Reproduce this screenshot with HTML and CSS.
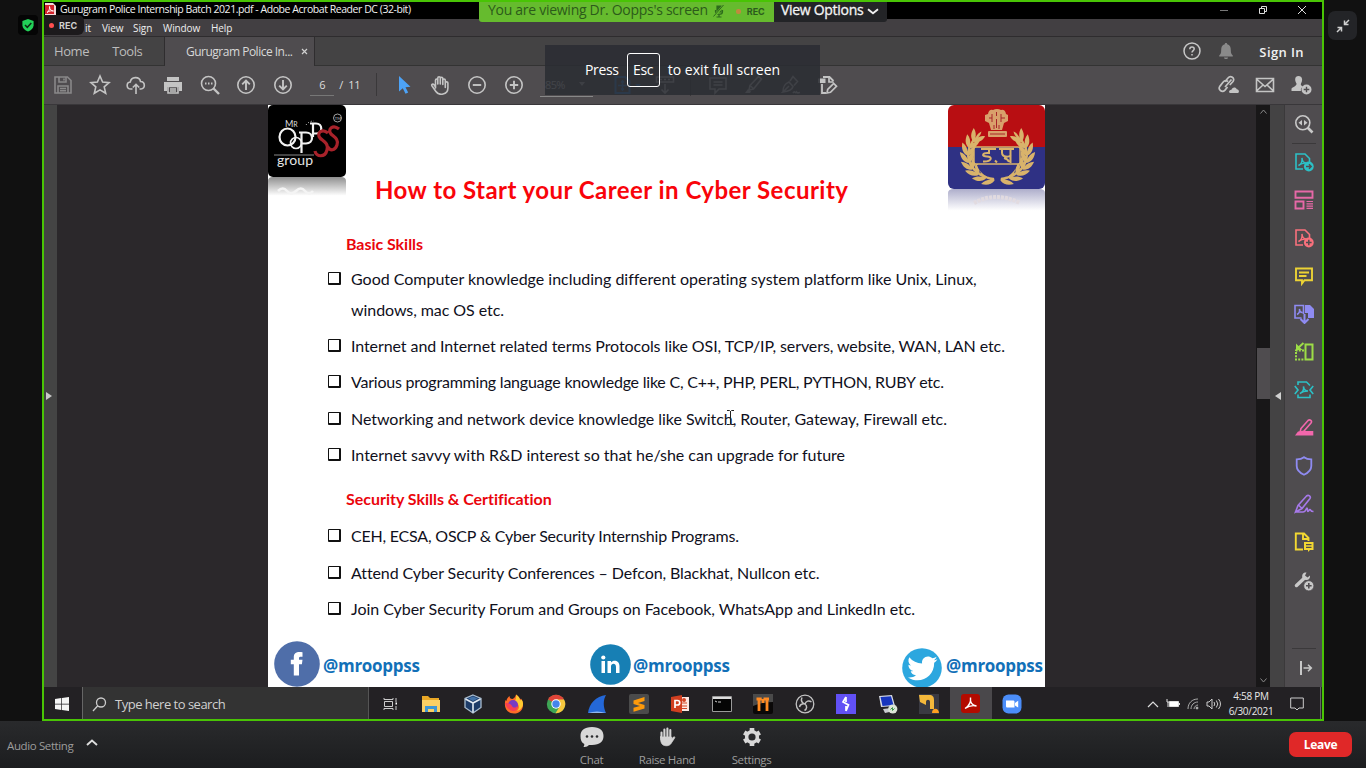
FILE: index.html
```
<!DOCTYPE html>
<html lang="en">
<head>
<meta charset="utf-8">
<title>Screen share</title>
<link rel="stylesheet" href="styles.css">
</head>
<body>
<div class="meeting">
  <aside class="side left">
    <div class="shield"><svg width="20" height="20" viewBox="0 0 20 20"><path d="M10 4l5.600 2v4.200c0 3-2.400 4.900-5.600 6.300-3.200-1.400-5.600-3.300-5.600-6.300V6z" fill="#22d058"/><path d="M7 10l2.300 2.300 4-4.300" fill="none" stroke="#0c2a14" stroke-width="1.500"/></svg></div>
  </aside>

  <main class="share">
    <div class="titlebar">
      <svg class="pdf" width="11" height="13" viewBox="0 0 11 13"><path d="M0 0h8l3 3v10H0z" fill="#f3d9da"/><rect y="2" width="9" height="9" fill="#d4232c"/><path d="M2 9.500c2-1 3-4 2.500-6 0 3 2 4.500 4 4.500-2-.5-5 0-6.500 1.500z" fill="none" stroke="#fff" stroke-width=".9"/></svg>
      <span class="window-name">Gurugram Police Internship Batch 2021.pdf - Adobe Acrobat Reader DC (32-bit)</span>
      <div class="winbtns">
        <svg width="12" height="12" viewBox="0 0 12 12"><path d="M2 6.500h8" stroke="#777"/></svg>
        <svg width="12" height="12" viewBox="0 0 12 12" fill="none" stroke="#ddd"><path d="M2.500 4.500h5v5h-5zM4.500 4V2.500h5v5H8"/></svg>
        <svg width="12" height="12" viewBox="0 0 12 12" fill="none" stroke="#ddd"><path d="M2 2l8 8M10 2l-8 8"/></svg>
      </div>
    </div>
    <nav class="menubar"><span class="m-edit">it</span><span class="m-view">View</span><span class="m-sign">Sign</span><span class="m-win">Window</span><span>Help</span></nav>
    <div class="tabs">
      <div class="tab-fixed"><span>Home</span><span>Tools</span></div>
      <div class="tab-active"><span>Gurugram Police In...</span><svg width="7" height="7" viewBox="0 0 7 7"><path d="M1 1l5 5M6 1L1 6" stroke="#d0d0d0" stroke-width="1.200"/></svg></div>
      <div class="tabs-right">
        <svg width="18" height="18" viewBox="0 0 18 18" fill="none" stroke="#c8c8c8"><circle cx="9" cy="9" r="8" stroke-width="1.500"/><path d="M6.800 7.200c0-3 4.400-2.800 4.400-.2 0 1.600-2.200 1.600-2.200 3.500M9 12v1.500" stroke-width="1.500"/></svg>
        <svg width="16" height="18" viewBox="0 0 16 18" fill="#8a8a8a"><path d="M8 1c.8 0 1.200.5 1.200 1.200C12 3 12.800 5 12.800 8c0 3 .6 4.300 2 5.500v1H1.200v-1c1.400-1.200 2-2.500 2-5.500 0-3 .8-5 3.600-5.800C6.800 1.500 7.200 1 8 1zM6 15.500h4c0 2-4 2-4 0z"/></svg>
        <span>Sign In</span>
      </div>
    </div>

    <div class="toolbar">
      <div class="tool dim"><svg width="20" height="20" viewBox="0 0 20 20"><path d="M2 2h12.500L18 5.500V18H2zM6 2v5h7V2M5 18v-7h10v7M7 13.500h6M7 15.800h6M11 3.500v2"/></svg></div>
      <div class="tool"><svg width="22" height="22" viewBox="0 0 22 22"><path d="M11 2l2.600 6 6.500.6-4.900 4.300 1.500 6.400L11 15.900l-5.700 3.400 1.500-6.400-4.900-4.300 6.500-.6z"/></svg></div>
      <div class="tool"><svg width="20" height="20" viewBox="0 0 20 20"><path d="M6.500 14H5c-5 0-5-6.500-.7-7C5 1.500 13.500 1 14.500 6.500c5 0 5 7.500.5 7.500h-1.500M10 19V9.500M6.800 12.500L10 9.300l3.200 3.200"/></svg></div>
      <div class="tool"><svg width="20" height="20" viewBox="0 0 20 20"><path d="M4 2h12v4H4z" fill="#c4c4c4" stroke="none"/><path d="M1 7h18v9h-3v-4H4v4H1z" fill="#c4c4c4" stroke="none"/><path d="M5 11.500h10V18H5zM7 14h6M7 16h6"/></svg></div>
      <div class="tool"><svg width="20" height="20" viewBox="0 0 20 20"><circle cx="8.500" cy="8.500" r="7"/><path d="M13.500 13.500l5.500 5.500" stroke-width="2.400"/><path d="M5 8.500h1.500M8 8.500h1.500M11 8.500h1.500" stroke-width="1.800"/></svg></div>
      <div class="tool"><svg width="20" height="20" viewBox="0 0 20 20"><circle cx="10" cy="10" r="8.200"/><path d="M10 15V5.500M6.200 9.300L10 5.500l3.800 3.800" stroke-width="1.900"/></svg></div>
      <div class="tool"><svg width="20" height="20" viewBox="0 0 20 20"><circle cx="10" cy="10" r="8.200"/><path d="M10 5v9.500M6.200 10.700L10 14.500l3.800-3.800" stroke-width="1.900"/></svg></div>
      <div class="pager"><span class="page-now">6</span><span class="page-of">/&nbsp; 11</span></div>
      <div class="tool"><svg width="20" height="20" viewBox="0 0 20 20"><path d="M5 1v15.500l3.800-3.300 2.700 5.600 2.700-1.300-2.700-5.300 5-.5z" fill="#4da3f7" stroke="none"/></svg></div>
      <div class="tool"><svg width="20" height="20" viewBox="0 0 20 20" stroke-linecap="round" stroke-linejoin="round"><path d="M5.500 13V5.200c0-1.700 2.300-1.700 2.300 0V9M7.800 9V3c0-1.700 2.500-1.700 2.500 0v6M10.300 9V3.500c0-1.700 2.500-1.700 2.500 0V9.500M12.800 9.500V5.200c0-1.600 2.500-1.600 2.500 0V12.500M15.300 9.500V8c0-1.600 2.600-1.500 2.600 0v5c0 7-9 8-12 3.500l-4-5.800c-.8-1.400 1-2.200 2.200-.9L5.500 12"/></svg></div>
      <div class="tool"><svg width="20" height="20" viewBox="0 0 20 20"><circle cx="10" cy="10" r="8.200"/><path d="M5.800 10h8.400" stroke-width="1.900"/></svg></div>
      <div class="tool"><svg width="20" height="20" viewBox="0 0 20 20"><circle cx="10" cy="10" r="8.200"/><path d="M5.800 10h8.400M10 5.800v8.400" stroke-width="1.900"/></svg></div>
      <div class="zoom"><span>85%</span><svg width="6" height="4" viewBox="0 0 6 4"><path d="M0 0h6L3 4z" fill="#bbb" stroke="none"/></svg></div>
      <div class="tool fit"><svg width="30" height="20" viewBox="0 0 30 20" stroke="#2f8fe8"><path d="M4.500 2H14l4.500 4v12h-14z" stroke-width="2"/><path d="M11.500 6v9M7 10.500h9M10 7.500L11.500 6 13 7.500M10 13.500l1.500 1.500 1.500-1.500"/><path d="M24 9h6l-3 3.500z" fill="#2f8fe8" stroke="none"/></svg></div>
      <div class="tool scroll"><svg width="20" height="20" viewBox="0 0 20 20"><path d="M1.500 2h17v5h-17zM5 4.500h2M9 4.500h2M13 4.500h2M10 9v9M6.500 14.500L10 18l3.500-3.500"/></svg></div>
      <div class="tool comment"><svg width="20" height="20" viewBox="0 0 20 20"><path d="M2 3h16v11h-7l-4 4v-4H2zM5.500 7h9M5.500 10h9"/></svg></div>
      <div class="tool"><svg width="20" height="20" viewBox="0 0 20 20"><path d="M14.500 1.500l3 2.500-8 10-4.500 1 1-4.500zM6.500 11l3 2.500"/><path d="M1 18l3-4 3 2.500-1 1.500z" fill="#c4c4c4" stroke="none"/></svg></div>
      <div class="tool"><svg width="20" height="20" viewBox="0 0 20 20"><path d="M2 17c0-5 1-8 6-10l4 4.500c-1 4-5 5-10 5.500l6-6M9 6l3-4.500 4.500 5-3.500 4M12 18c2-3 2 1 3.500-1 1 1.500 2 1 3.500.5"/></svg></div>
      <div class="tool"><svg width="20" height="20" viewBox="0 0 20 20"><path d="M5 2h6.500l4 4M4 9v9h4" stroke-width="1.800"/><path d="M0 3.500h7.500v4.500H0z" fill="#c4c4c4" stroke="none"/><path d="M11 3v4h4.500M9 18l.7-3.500 6-6 2.800 2.800-6 6z" stroke-width="1.700"/></svg></div>
      <div class="tools-right">
        <svg width="22" height="20" viewBox="0 0 22 20"><path d="M8 12l6.500-7.500M7.800 6.800L11 3c2.500-3 7.500 0 5 3.500L12.800 10M11 6.500c-2-1.500-4-.5-5 .8l-3 3.800c-2.500 3.400 2 7 5 4L10.500 12" stroke-width="1.700"/><path d="M12 18h8.500c2 0 2-3.500-.7-3.700-1-3-5-2.200-5.300.5-2.500-.2-3.500 3-1 3.200z" fill="#c4c4c4" stroke="none"/></svg>
        <svg width="20" height="20" viewBox="0 0 20 20"><path d="M1.500 3.500h17v13h-17zM1.500 4l8.500 7.500L18.500 4M1.500 16L8 10M18.500 16L12 10"/></svg>
        <svg width="21" height="20" viewBox="0 0 21 20" stroke="none" fill="#c4c4c4"><path d="M7.500 1c4 0 4.500 4.500 2.500 7.500-.5 1.500 0 2 2 3-2 1.500-2.500 3-2 4.500H.5v-2c0-2 5.500-2.500 5-5.500C3.500 5.500 3.500 1 7.500 1z"/><circle cx="15.500" cy="14.500" r="5"/><path d="M12.700 14.500h5.600M15.500 11.700v5.600" stroke="#4f4c4f" stroke-width="1.400"/></svg>
      </div>
    </div>

    <div class="workspace">
      <div class="nav-strip"><svg width="6" height="8" viewBox="0 0 6 8"><path d="M0 0l6 4-6 4z" fill="#c8c8c8"/></svg></div>
      <div class="canvas">
        <article class="page">
          <header class="page-head">
            <div class="logo">
              <svg width="78" height="94" viewBox="0 0 78 94">
                <defs><linearGradient id="fadeL" x1="0" y1="0" x2="0" y2="1"><stop offset="0" stop-color="#8f8f8f"/><stop offset=".85" stop-color="#fff"/></linearGradient></defs>
                <path d="M0 94V76q0-4 5-4h68q5 0 5 4v18z" fill="url(#fadeL)"/>
                <path d="M10 86q5-5 9 0t9 0 9 0 8 0" stroke="#f4f4f4" stroke-width="2.500" fill="none"/>
                <rect y="0" width="78" height="72" rx="5" fill="#000"/>
                <text x="17" y="22" font-family="Lato, sans-serif" font-size="9" fill="#ddd">M<tspan font-size="7">R</tspan></text>
                <g fill="none" stroke="#f2f2f2" stroke-width="2.200">
                  <ellipse cx="19.500" cy="32" rx="8" ry="8.500"/><circle cx="28" cy="38" r="5.500" stroke-width="1.600"/>
                  <path d="M33.500 48V27M31 27.500h7c8 0 8 11 0 11h-4M45 32V18M42 18.500h6c7 0 7 10 0 10h-3"/>
                  <path d="M38 20q3-4 8-4" stroke-dasharray="1 2" stroke-width="1"/>
                </g>
                <path d="M60 28c-6-5-12 0-8 5 3 3 9 5 7 12-2 8-11 7-12 1M71 24c-6-5-12 0-8 5 3 3 8 5 6 11-2 6-7 6-9 2" fill="none" stroke="#a8222a" stroke-width="3.200"/>
                <path d="M6 50h40" stroke="#aaa" stroke-width=".8"/>
                <text x="9" y="60" font-family="Lato, sans-serif" font-size="14" fill="#e5e5e5" textLength="36">group</text>
                <circle cx="69.500" cy="13" r="4" fill="none" stroke="#ccc" stroke-width=".8"/><text x="66.800" y="14.800" font-family="Lato, sans-serif" font-size="4" fill="#ccc">TM</text>
              </svg>
            </div>
            <h1>How to Start your Career in Cyber Security</h1>
            <div class="crest">
              <svg width="97" height="108" viewBox="0 0 97 108">
                <defs><linearGradient id="fadeR" x1="0" y1="0" x2="0" y2="1"><stop offset="0" stop-color="#aeaecb"/><stop offset=".9" stop-color="#fff"/></linearGradient>
                <clipPath id="crestClip"><rect y="0" width="97" height="84" rx="6"/></clipPath>
                <path id="leaf" d="M0 5C-5 3-7-1-7-7-3-5-1-2-.3 1-.8-3 0-6 1.500-8 3-4 2-1 .8 1 2-3 4-5 7-6 7 0 5 3 0 5z"/>
                <g id="branch"><use href="#leaf" transform="translate(41.700 74.100) rotate(-75)"/><use href="#leaf" transform="translate(33.600 71.200) rotate(-58)"/><use href="#leaf" transform="translate(26.900 66.400) rotate(-41)"/><use href="#leaf" transform="translate(22.100 60.200) rotate(-24)"/><use href="#leaf" transform="translate(19.700 53) rotate(-7)"/><use href="#leaf" transform="translate(20 45.700) rotate(10)"/><use href="#leaf" transform="translate(22.800 38.600) rotate(24)"/><use href="#leaf" transform="translate(28 32.600) rotate(32)"/></g></defs>
                <path d="M0 108V88q0-4 6-4h85q6 0 6 4v20z" fill="url(#fadeR)"/>
                <path d="M26 98q22-12 46 0" stroke="#e2dbe0" stroke-width="4" stroke-dasharray="3 1" fill="none"/>
                <g clip-path="url(#crestClip)"><path d="M0-2h97v45H0z" fill="#b80e12"/><path d="M0 42h97v43H0z" fill="#2f3184"/></g>
                <g fill="#d9b36b"><use href="#branch"/><use href="#branch" transform="translate(99 0) scale(-1 1)"/></g>
                <path d="M29 60h40c-3 9-10 13-20 13s-17-4-20-13z" fill="#2f3184"/>
                <rect x="26" y="42" width="46" height="17" rx="2" fill="#2f3184" stroke="#d9b36b" stroke-width="1.500"/>
                <path d="M33 44h15M41 44v4c-7-.5-8 3.500-2 3.500 6 0 5 5.500-4 5M47 55.500l2 2M51 44h15M54 44v3.500c0 5 7 5 9 2.500M62.500 44v14M56 53q4 1 5 4" fill="none" stroke="#d9b36b" stroke-width="2"/>
                <path d="M40 9q1-5 5-4 4-2 8 0 4-1 5 4l2 1v6l-4 2-2 7H43l-2-7-4-2v-6z" fill="#d9a06b"/><rect x="40" y="26" width="19" height="6" rx="1" fill="#d9a06b"/>
                <path d="M44 9v8M48.500 7v4M53 9v8M46 20v4M48.500 14v9M51 20v4M41 13h3M53 13h4M42 29h15" stroke="#a8242a" fill="none"/>
              </svg>
            </div>
          </header>
          <h2 class="h-basic">Basic Skills</h2>
          <ul class="list">
            <li class="two"><i class="box"></i><p>Good Computer knowledge including different operating system platform like Unix, Linux,<br><span class="l-win">windows, mac OS etc.</span></p></li>
            <li><i class="box"></i><p class="l-net">Internet and Internet related terms Protocols like OSI, TCP/IP, servers, website, WAN, LAN etc.</p></li>
            <li><i class="box"></i><p class="l-prog">Various programming language knowledge like C, C++, PHP, PERL, PYTHON, RUBY etc.</p></li>
            <li class="has-cursor"><i class="box"></i><p class="l-dev">Networking and network device knowledge like Switch, Router, Gateway, Firewall etc.</p>
              <svg class="ibeam" width="7" height="15" viewBox="0 0 7 15" fill="none" stroke="#222"><path d="M0 .5h2.500l1 1 1-1H7M3.500 1v13M0 14.500h2.500l1-1 1 1H7"/></svg></li>
            <li><i class="box"></i><p class="l-rnd">Internet savvy with R&amp;D interest so that he/she can upgrade for future</p></li>
          </ul>
          <h2 class="h-cert">Security Skills &amp; Certification</h2>
          <ul class="list">
            <li><i class="box"></i><p class="l-ceh">CEH, ECSA, OSCP &amp; Cyber Security Internship Programs.</p></li>
            <li><i class="box"></i><p class="l-conf">Attend Cyber Security Conferences – Defcon, Blackhat, Nullcon etc.</p></li>
            <li><i class="box"></i><p class="l-dev">Join Cyber Security Forum and Groups on Facebook, WhatsApp and LinkedIn etc.</p></li>
          </ul>
          <footer class="social">
            <div class="fb"><svg width="46" height="46" viewBox="0 0 46 46"><circle cx="23" cy="23" r="22.800" fill="#4f6ea9"/><path d="M19.800 34.500V23.300h-3v-4.500h3v-2.500c0-4.600 3-5.800 8.700-5v4.400c-2.500-.2-3.500 0-3.500 1.500v1.600h3.500l-.6 4.500H25v11.200z" fill="#fff"/></svg><span>@mrooppss</span></div>
            <div class="li"><svg width="41" height="41" viewBox="0 0 41 41"><circle cx="20.500" cy="20.500" r="20.300" fill="#177fb4"/><path d="M11.500 17H15v12h-3.500zM17.500 17H21v1.500c2-3 8.500-2.500 8.500 3.500v7H26v-6c0-4.500-5-4-5-.5V29h-3.500z" fill="#fff"/><circle cx="13.300" cy="13.500" r="2.100" fill="#fff"/></svg><span>@mrooppss</span></div>
            <div class="tw"><svg width="40" height="40" viewBox="0 0 40 40"><circle cx="20" cy="20" r="19.800" fill="#2ca7df"/><path d="M6 29.500c3.500.3 6-.6 8-2.200-3-.3-4.600-1.800-5.300-4 1 .1 1.600.1 2.500-.2-3-1-4.800-3.300-4.800-6.400.8.500 1.600.7 2.500.8-2.600-2-3.200-5.300-1.600-8.300 3.400 4 7.500 6 12.800 6.300-1-6 5.800-9.500 10.300-5.200 1.500-.3 2.800-.8 4.200-1.600-.5 1.600-1.300 2.600-2.700 3.600 1.300-.1 2.300-.4 3.500-1-.8 1.500-1.800 2.500-3.200 3.500C32.300 29 18 37 6 29.500z" fill="#fff"/></svg><span>@mrooppss</span></div>
          </footer>
        </article>
      </div>
      <div class="scrollbar">
        <svg width="7" height="5" viewBox="0 0 7 5"><path d="M.5 4.500l3-3.500 3 3.500" fill="none" stroke="#888"/></svg>
        <div class="thumb"></div>
        <svg class="down" width="7" height="5" viewBox="0 0 7 5"><path d="M.5.500l3 3.500 3-3.500" fill="none" stroke="#888"/></svg>
      </div>
      <div class="pane-strip"><svg width="6" height="8" viewBox="0 0 6 8"><path d="M6 0L0 4l6 4z" fill="#d0d0d0"/></svg></div>
      <div class="panel">
        <div class="p-icon"><svg width="20" height="20" viewBox="0 0 20 20" stroke="#c8c8c8"><circle cx="8.800" cy="8.800" r="7"/><path d="M13.500 13.500l5 5" stroke-width="2.600"/><path d="M8 6v5.600L4.500 8.800zM10 6v5.600l3.500-2.800z" fill="#c8c8c8" stroke="none"/></svg></div>
        <div class="p-icon line"><svg width="20" height="20" viewBox="0 0 20 20" stroke="#2cc0c6"><path d="M9 17H2V2h9l4.500 4.500V10M4.500 13.500c3-1.500 4-5 3.500-7.500 0 3 2 5 4.500 5-3-.3-5.500.5-8 2.500z"/><circle cx="14.800" cy="14.500" r="4.900" fill="#2cc0c6" stroke="none"/><path d="M12 14.500h5M15 12.300l2.200 2.200-2.200 2.200" stroke="#4f4c4f" stroke-width="1.400"/></svg></div>
        <div class="p-icon"><svg width="20" height="20" viewBox="0 0 20 20" stroke="#e668a7"><path d="M1.500 1.500h17v6.300h-17zM1.500 11.500h8v7h-8z" stroke-width="1.900"/><path d="M12.500 11.500h6.500M12.500 13.800h6.500M12.500 16.100h6.500M12.500 18.400h6.500" stroke-width="1.200"/></svg></div>
        <div class="p-icon"><svg width="20" height="20" viewBox="0 0 20 20" stroke="#f9707c"><path d="M9 17H2V2h9l4.500 4.500V10M4.500 13.500c3-1.500 4-5 3.500-7.500 0 3 2 5 4.500 5-3-.3-5.500.5-8 2.500z"/><circle cx="14.800" cy="14.500" r="4.900" fill="#f9707c" stroke="none"/><path d="M12 14.500h5.600M14.800 11.700v5.600" stroke="#4f4c4f" stroke-width="1.500"/></svg></div>
        <div class="p-icon"><svg width="20" height="20" viewBox="0 0 20 20" stroke="#ecd235"><path d="M2 2.500h16v11.700h-7.500L8 17.500v-3.300H2zM5 6.500h10M5 10h7.500" stroke-width="1.900"/></svg></div>
        <div class="p-icon"><svg width="20" height="20" viewBox="0 0 20 20" stroke="#8f8bf2"><path d="M7.500 14H1V1.500h8.500V10M3 10.500c2-1 3-3 2.500-5.500 0 2 1 3.500 3 3.500"/><path d="M11 1h5l4 4v9h-6V9h-3z" fill="#8f8bf2" stroke="none"/><path d="M10.500 10v8M6.500 15l4 4 4-4" stroke-width="2"/></svg></div>
        <div class="p-icon"><svg width="20" height="20" viewBox="0 0 20 20" stroke="#9ddd47"><path d="M11.500 2.500h7v15h-7z" stroke-width="2"/><path d="M10 8.500H2v9h8" stroke-dasharray="2 1.200" stroke-width="2"/><path d="M9.500 1L4 6" stroke-width="2"/><path d="M2 1.500V8h6.500z" fill="#9ddd47" stroke="none"/></svg></div>
        <div class="p-icon"><svg width="20" height="20" viewBox="0 0 20 20" stroke="#2cc0c6"><path d="M4 5V2h8.500L16 5.500M4 14.500v3h12v-3M.8 6L4 10 .8 14M19.200 6L16 10l3.200 4M6 13.500c3-1.500 4-4.500 3.500-7 .3 3 2 4.500 4.500 4.500-3 0-5.500.5-8 2.500z"/></svg></div>
        <div class="p-icon"><svg width="20" height="20" viewBox="0 0 20 20" stroke="#f267ac"><path d="M7 10.500L14 2.500c2-1.500 4.500.5 3 2.500l-7 8-4 1.500z"/><path d="M5.500 11l4 4M8.500 13h10.800v4.500H1l3-4z" fill="#f267ac" stroke="none"/></svg></div>
        <div class="p-icon"><svg width="20" height="20" viewBox="0 0 20 20" stroke="#8f8bf2"><path d="M10 1.200c2 1.600 4.500 2.200 7.300 2.200V10c0 4-3.300 7-7.300 8.800C6 17 2.700 14 2.700 10V3.400c2.800 0 5.300-.6 7.300-2.200z" stroke-width="1.800"/></svg></div>
        <div class="p-icon"><svg width="20" height="20" viewBox="0 0 20 20" stroke="#a679e8"><path d="M1.500 18L4 11.500 12.500 2c2-1.500 5 .5 3.300 2.800L8 14.500zM8 14.500l-3-3M1.500 18H9c3 0 3-4 4-4s0 3.500 1 3.500 1-2 2-2 0 2 3.500 2"/></svg></div>
        <div class="p-icon"><svg width="20" height="20" viewBox="0 0 20 20" stroke="#f3d832"><path d="M9 17.500H1.800v-16H10l4.500 4.500V9M9 1.500V7h5.500" stroke-width="1.900"/><path d="M10 10h9.500v8H16l-2 2v-2h-4z" fill="#f3d832" stroke="none"/><path d="M12 12.700h5.500M12 15.300h5.500" stroke="#4f4c4f" stroke-width="1.200"/></svg></div>
        <div class="p-icon"><svg width="20" height="20" viewBox="0 0 20 20" stroke="#c8c8c8"><path d="M2.500 14.500L10 7.500" stroke-width="3.500" stroke-linecap="round"/><path d="M12.500 1.500C9 1 7.500 4 8.500 7l3 2c3 .5 5-1.500 4.500-4.500l-2.500 2-2.500-2z" fill="#c8c8c8" stroke="none"/><circle cx="14.800" cy="14.800" r="5.100" fill="#c8c8c8" stroke="#4f4c4f" stroke-width=".8"/><path d="M12 14.800h5.600M14.800 12v5.600" stroke="#4f4c4f"/></svg></div>
        <div class="p-icon last"><svg width="14" height="14" viewBox="0 0 14 14" stroke="#c8c8c8"><path d="M2 0v14" stroke-width="2"/><path d="M4.500 7H12M9 3.800L12.300 7 9 10.200"/></svg></div>
      </div>
    </div>

    <div class="taskbar">
      <div class="start"><svg width="14" height="14" viewBox="0 0 14 14" fill="#f5f5f5"><path d="M0 2l6.300-.9v5.600H0zM7 1l7-1v6.700H7zM0 7.400h6.300V13L0 12zM7 7.400h7V14l-7-1z"/></svg></div>
      <div class="search"><svg width="15" height="15" viewBox="0 0 15 15" fill="none" stroke="#ccc" stroke-width="1.300"><circle cx="9" cy="5.500" r="4.500"/><path d="M5.800 8.800L1 14"/></svg><span>Type here to search</span></div>
      <div class="apps">
        <div><svg width="14" height="14" viewBox="0 0 14 14" fill="none" stroke="#ccc"><path d="M1.500 4.500h8v5h-8zM1 1v1.500h9V1M1 13v-1.500h9V13M13 1v4M13 9v4"/><path d="M12.500 5.500h1.500v2h-1.500z" fill="#fff" stroke="none"/></svg></div>
        <div><svg width="20" height="18" viewBox="0 0 20 18"><path d="M1 1h6l2 2h9v4H1z" fill="#e9a826"/><path d="M1 5h18v12H1z" fill="#fbd064"/><path d="M4 17v-6h12v6h-3v-3H7v3z" fill="#3f97d3"/></svg></div>
        <div><svg width="18" height="20" viewBox="0 0 18 20"><path d="M9 1l8 3.500v9L9 19l-8-5.500v-9z" fill="#1d3c68" stroke="#a9bdd0" stroke-width="1.300"/><path d="M1.500 5L9 9l7.500-4M9 9v9.500" stroke="#e3ebf3" stroke-width="1.600" fill="none"/><path d="M4 4.500l5-2 5 2-5 2.500z" fill="#4473a8"/></svg></div>
        <div><svg width="20" height="20" viewBox="0 0 20 20"><path d="M10 19.500C2 19.500-.5 12 1.500 6l1 1c0-2 1.500-4 3-5 0 2 1 3 3 3 2-1 3-2 3.500-4.500 3 2 3.500 3.500 4 5l1-1c5 8 0 15-7 15z" fill="#ff6b28"/><path d="M12 .5c3 2 4 4 4 6l1.500-1C21 10 18 16 13 17c4-4 1-8-2-10 1-2 1.500-4 1-6.500z" fill="#ffcb30"/><circle cx="9" cy="11" r="5" fill="#793bc2"/><path d="M1 9c3 0 6 1 7 3s4 2 5 0c2 4-3 6-6 4.500S2 13 1 9z" fill="#f83e54"/></svg></div>
        <div><svg width="20" height="20" viewBox="0 0 20 20"><circle cx="10" cy="10" r="9.200" fill="#3ea655"/><path d="M10 10L2 5.400A9.200 9.200 0 0118 5.400z" fill="#e04438"/><path d="M10 5.400h8a9.200 9.200 0 01-8.500 13.800L14 12z" fill="#f6c73e"/><circle cx="10" cy="10" r="4.700" fill="#fff"/><circle cx="10" cy="10" r="3.700" fill="#4485ec"/></svg></div>
        <div><svg width="20" height="20" viewBox="0 0 20 20"><path d="M1 19C2 10 9 2 19 1c-3 5-3 12 0 18z" fill="#2468d8"/><path d="M1 19q9-3 18 0z" fill="#8fb7ef"/></svg></div>
        <div><svg width="20" height="20" viewBox="0 0 20 20"><rect width="20" height="20" rx="2" fill="#4b4b4b"/><path d="M4.500 6.500l11-3.500v4L9 9l6.500 2v3.500l-11 3.300v-4L11 12l-6.500-2z" fill="#ff9a0a"/></svg></div>
        <div><svg width="20" height="20" viewBox="0 0 20 20"><path d="M10 3h9v14h-9z" fill="#fbe9e4"/><path d="M12 9h5M12 12h5M12 14.500h5" stroke="#d24625"/><circle cx="14" cy="6" r="2" fill="#d24625"/><path d="M1 3l11-2v18L1 17z" fill="#d03f20"/><path d="M5 14V6.500h2.500c3 0 3 4.500 0 4.500H5" fill="none" stroke="#fff" stroke-width="1.700"/></svg></div>
        <div><svg width="20" height="16" viewBox="0 0 20 16"><path d="M.5.500h19v15H.5z" fill="#050505" stroke="#9a9a9a"/><path d="M1 2h18" stroke="#ddd" stroke-width="2"/><path d="M3 5l2 1M6 6h3" stroke="#ccc"/></svg></div>
        <div><svg width="20" height="20" viewBox="0 0 20 20"><rect width="20" height="20" rx="2" fill="#0a0808"/><path d="M0 0h20v8Q10 8 0 12z" fill="#4a4a4a"/><path d="M6 17V5.500M3.500 5h5.200M14 17V5.500M10.500 5H16M10 5v4" fill="none" stroke="#ff8a22" stroke-width="2.800"/></svg></div>
        <div><svg width="20" height="20" viewBox="0 0 20 20" fill="none" stroke="#c2c2c2"><circle cx="10" cy="10" r="8.800" fill="#262428" stroke-width="1.300"/><path d="M7 3.500c-1.500 3 0 6 3 6.500M10 10c1-3 4-4 6.500-2M10 10c2.500 2 2 5-.5 6.500M10 10c-2.500-.8-5 .5-5.500 3" stroke-width="1.500"/></svg></div>
        <div><svg width="20" height="20" viewBox="0 0 20 20"><path d="M0 0h20v20H0z" fill="#6150f5"/><path d="M10 3L7 8l5.500 3L10 17M10 3v5M10 17v-5" stroke="#fff" stroke-width="1.700" fill="none"/></svg></div>
        <div><svg width="20" height="20" viewBox="0 0 20 20"><path d="M1 2l13-1 3 11-14 1z" fill="#d8dce5"/><path d="M2.500 3l10.500-.8L15.500 11 4.500 12z" fill="#1735bd"/><path d="M5 15l8-1 3 3-9 2z" fill="#c9cbd0"/><circle cx="14.800" cy="15" r="4.600" fill="#dce5d7"/><path d="M12.500 15.500l2-2v3l2-2" stroke="#3b9448" fill="none"/></svg></div>
        <div><svg width="20" height="20" viewBox="0 0 20 20"><path d="M0 0h20v20H0z" fill="#3a3a42"/><path d="M0 1h10c4 0 5 2 5 5v9h-4V8c0-3-4-3-4 0v3L1 8z" fill="#f4b83b"/><path d="M13 19c0-6 7-5 7 0z" fill="#ff9f20"/></svg></div>
        <div class="current"><svg width="19" height="19" viewBox="0 0 19 19"><rect width="19" height="19" rx="3" fill="#b30b00"/><path d="M4 14.500c4-2.500 6-7 5.500-11C9 8 11 11.500 15.500 12c-4-1-8 0-11.500 2.500z" stroke="#fff" stroke-width="1.400" fill="none"/></svg></div>
        <div><svg width="20" height="20" viewBox="0 0 20 20"><rect x=".5" y=".5" width="19" height="19" rx="6" fill="#4b8df8"/><path d="M4 6.500h7c1 0 1.500.5 1.500 1.500v5.500h-7C4.500 13.500 4 13 4 12zM13 9l3.200-2.300v6.800L13 11.500z" fill="#fff"/></svg></div>
      </div>
      <div class="tray">
        <svg width="12" height="8" viewBox="0 0 12 8"><path d="M1 7l5-5 5 5" fill="none" stroke="#ddd" stroke-width="1.200"/></svg>
        <svg width="14" height="10" viewBox="0 0 14 10"><path d="M3.500 2.500h9v5h-9z" fill="#fff" stroke="#ddd"/><path d="M1 0v3h2.500M2 3v5" stroke="#ddd" fill="none"/><path d="M13 4h1v2h-1z" fill="#ddd"/></svg>
        <svg width="12" height="12" viewBox="0 0 12 12" fill="none" stroke="#aaa"><path d="M1 11C1 5 5 1 11 1M4 11c0-4 3-7 7-7M7 11c0-2 2-4 4-4"/><circle cx="10" cy="10" r="1" fill="#ddd"/></svg>
        <svg width="15" height="12" viewBox="0 0 15 12" fill="none" stroke="#ccc"><path d="M1 4h2l3-3v10L3 8H1zM8 4q1.500 2 0 4M10.300 2.500q3 3.500 0 7M12.500 1q4 5 0 10"/></svg>
        <div class="clock"><span>4:58 PM</span><span>6/30/2021</span></div>
        <svg width="14" height="14" viewBox="0 0 14 14"><path d="M.7 1h12.600v10H9l-2 2-2-2H.7z" fill="none" stroke="#ccc"/></svg>
      </div>
    </div>

    <div class="rec"><i></i>REC</div>
    <div class="banner">
      <div class="viewing"><span>You are viewing Dr. Oopps's screen</span><svg width="12" height="14" viewBox="0 0 12 14"><path d="M4 2h4v6H4zM2.500 6v2c0 3 7 3 7 0V6M6 10.500V13M3.500 13h5" fill="none" stroke="#2d6a1c" stroke-width="1.200"/><path d="M4 2h4v6H4z" fill="#2d6a1c"/><path d="M1 12.500L11 1" stroke="#66bb2e" stroke-width="2.500"/><path d="M.5 12.500L10.500 1" stroke="#2d6a1c"/></svg><i></i><b>REC</b></div>
      <div class="options"><span>View Options</span><svg width="12" height="7" viewBox="0 0 12 7"><path d="M1 1.200l5 4 5-4" fill="none" stroke="#f0f0f0" stroke-width="1.900"/></svg></div>
    </div>
    <div class="toast"><span class="t-press">Press</span><kbd>Esc</kbd><span>to exit full screen</span></div>
  </main>

  <aside class="side right">
    <div class="shrink"><svg width="14" height="14" viewBox="0 0 14 14" stroke="#d0d0d0" stroke-width="1.500" fill="none"><path d="M13 1L9 5M8.500 1.500v4h4M1 13l4-4M1.500 8.500h4v4"/></svg></div>
  </aside>

  <div class="controls">
    <div class="audio"><span>Audio Setting</span><svg width="12" height="7" viewBox="0 0 12 7"><path d="M1 6l5-4.500L11 6" fill="none" stroke="#ddd" stroke-width="1.900"/></svg></div>
    <div class="buttons">
      <div class="b-chat"><svg width="24" height="22" viewBox="0 0 24 22"><path d="M12 1c8 0 11.500 3.500 11.500 9S20 19 12 19H9q-2 2.500-5.500 2 1-1.500.8-3C1.500 16.500.5 14 .5 10 .5 4.500 4 1 12 1z" fill="#d8d8d8"/><g fill="#2a2b2d"><circle cx="7" cy="10.500" r="1.300"/><circle cx="12" cy="10.500" r="1.300"/><circle cx="17" cy="10.500" r="1.300"/></g></svg><span>Chat</span></div>
      <div class="b-hand"><svg width="18" height="22" viewBox="0 0 18 22" fill="none" stroke="#d4d4d4" stroke-width="2.100" stroke-linecap="round"><path d="M3.500 13V6.500M6.400 11V3.500M9.400 11V2.500M12.300 11V4"/><path d="M2.500 11h11v2l2-2c1-.8 1.700.2 1 1.200l-3.800 5.800c-2 2.500-7.500 2.300-9-.5-1-2-1.200-4-1.200-6.500z" fill="#d4d4d4" stroke-width=".8"/></svg><span>Raise Hand</span></div>
      <div class="b-set"><svg width="20" height="22" viewBox="0 0 20 22"><g fill="none" stroke="#d8d8d8"><circle cx="10" cy="11" r="5.200" stroke-width="3.800"/><path d="M10 2v18M2.200 6.500l15.600 9M2.200 15.500l15.600-9" stroke-width="4.600"/></g><circle cx="10" cy="11" r="3.600" fill="#28292b"/></svg><span>Settings</span></div>
    </div>
    <div class="leave">Leave</div>
  </div>
</div>
</body>
</html>
```
FILE: styles.css
```
* { box-sizing: border-box; }
body { margin: 0; background: #111; font-family: "Open Sans", "Noto Sans", sans-serif; color: #e0e0e0; }
svg { display: block; flex: none; }
h1, h2, p, ul { margin: 0; padding: 0; font-weight: normal; }
span, p, h1, h2 { white-space: nowrap; }

.meeting { width: 1366px; height: 768px; overflow: hidden; display: grid; grid-template: 721px 47px / 42px 1282px 42px; background: #111; }
.side.left { padding: 15px 0 0 18px; }
.shield { width: 20px; height: 20px; border-radius: 4px; background: #050505; }
.side.right { padding: 11px 0 0 4px; }
.shrink { width: 29px; height: 29px; border-radius: 7px; background: #232427; display: flex; align-items: center; justify-content: center; }

.share { position: relative; border: 2px solid #49c405; display: flex; flex-direction: column; background: #4f4c4f; overflow: hidden; }

.titlebar { height: 17px; background: #000; display: flex; align-items: center; flex: none; padding-bottom: 2px; }
.pdf { margin-left: 1px; }
.window-name { margin-left: 4px; font-size: 10.5px; letter-spacing: -0.447px; color: #f0f0f0; line-height: 15px; }
.winbtns { margin-left: auto; display: flex; gap: 27px; padding-right: 14px; }

.menubar { height: 18px; background: #423f42; border-bottom: 1px solid #2e2c2e; display: flex; align-items: center; padding-left: 41px; font-size: 10px; color: #eee; flex: none; }
.menubar span { letter-spacing: -0.1px; line-height: 14px; }
.m-edit { width: 17px; }
.m-view { width: 31px; }
.m-sign { width: 30px; }
.m-win { width: 48px; }

.tabs { height: 29px; background: #444344; display: flex; flex: none; }
.tab-fixed { width: 121px; border-right: 1px solid #2f2d2f; border-bottom: 1px solid #333; display: flex; align-items: center; padding-left: 10px; gap: 23px; font-size: 13px; letter-spacing: -0.4px; color: #bcbcbc; }
.tab-active { width: 149px; background: #4f4c4f; display: flex; align-items: center; padding-left: 21px; gap: 9px; font-size: 12px; letter-spacing: -0.5px; color: #d8d8d8; }
.tabs-right { flex: 1; border-left: 1px solid #2f2d2f; border-bottom: 1px solid #333; display: flex; align-items: center; justify-content: flex-end; padding-right: 18px; font-size: 13px; letter-spacing: 0.4px; color: #f0f0f0; font-weight: 600; }
.tabs-right span { margin-left: 25px; line-height: 18px; padding-top: 1px; }
.tabs-right svg + svg { margin-left: 17px; }

.toolbar { height: 39px; border-bottom: 1px solid #39373a; display: flex; align-items: center; flex: none; fill: none; stroke: #c4c4c4; stroke-width: 1.6; padding: 0 0 1px .5px; }
.tool { width: 36.7px; flex: none; display: flex; justify-content: center; }
.dim { opacity: .5; }
.pager { width: 76px; height: 23px; flex: none; border-right: 1px solid #3a383a; display: flex; align-items: center; font-size: 11px; padding-left: 9px; margin-right: 8px; color: #ddd; }
.page-now { width: 24px; height: 23px; line-height: 23px; text-align: center; border-bottom: 1px solid #777; }
.page-of { margin-left: 5px; letter-spacing: -.3px; }
.zoom { width: 53px; height: 24px; margin-left: 8px; flex: none; border-bottom: 1px solid #888; display: flex; align-items: center; gap: 14px; padding-left: 5px; font-size: 11px; letter-spacing: -.7px; }
.fit { width: 38px; margin-left: 11px; padding-left: 5px; }
.scroll { width: 43px; height: 23px; align-items: center; padding-right: 8px; border-right: 1px solid #3a383a; margin-left: 6px; }
.comment { width: 36px; margin-left: 9px; }
.tools-right { margin-left: auto; display: flex; align-items: center; gap: 16px; padding-right: 10px; }

.workspace { flex: 1; min-height: 0; display: flex; }
.nav-strip { width: 13px; background: #444; display: flex; align-items: center; padding-left: 2px; }
.canvas { flex: 1; background: #2b282b; padding-left: 211px; }
.page { width: 777px; height: 583px; background: #fff; color: #10101c; font: 16px/31px Lato, Carlito, sans-serif; font-variant-ligatures: none; overflow: hidden; }
.page-head { height: 124px; display: flex; justify-content: space-between; align-items: flex-start; }
h1 { margin-top: 70px; font-size: 24px; line-height: 30px; font-weight: bold; letter-spacing: 0.46px; color: #f9040a; }
.logo { width: 78px; }
.page-head h1 { margin-left: 29px; margin-right: auto; }
h2 { padding-left: 78px; font-size: 16px; line-height: 30px; font-weight: bold; color: #ea050c; letter-spacing: -.04px; }
.h-basic { height: 34px; }
.h-cert { height: 44.5px; padding-top: 10.5px; letter-spacing: -.02px; }
.list { list-style: none; }
.list li { height: 36.5px; display: flex; padding-left: 60px; line-height: 31px; padding-top: 2.5px; }
.list li.two { height: 64px; padding-top: 0; }
.list p { letter-spacing: -.015px; }
.box { width: 13px; height: 13px; flex: none; margin: 9px 10px 0 0; border: 1px solid #111; border-right-width: 2px; border-bottom-width: 2px; border-radius: 1px; }
.list .l-win { letter-spacing: -.07px; }
.list .l-net { letter-spacing: -.087px; }
.list .l-prog { letter-spacing: -.221px; }
.list .l-dev { letter-spacing: -.047px; }
.list .l-rnd { letter-spacing: -.021px; }
.list .l-ceh { letter-spacing: -.208px; }
.list .l-conf { letter-spacing: -.097px; }
.has-cursor { position: relative; }
.ibeam { position: absolute; left: 459px; top: 10px; }
.social { height: 60px; display: flex; font: bold 17px/24px "Open Sans", sans-serif; letter-spacing: -.268px; color: #1270b8; }
.social div { display: flex; align-items: flex-start; }
.social span { margin-top: 27px; }
.fb { width: 322px; padding-left: 6px; gap: 3px; }
.fb svg { margin-top: 14px; }
.li { width: 312px; gap: 2px; }
.li svg { margin-top: 17px; }
.tw { gap: 4px; }
.tw svg { margin-top: 21px; }

.scrollbar { width: 14px; background: #181718; display: flex; flex-direction: column; align-items: center; padding: 4px 0; }
.thumb { width: 13px; height: 51px; margin-top: 234px; background: #4f4c4f; }
.down { margin-top: auto; }
.pane-strip { width: 15px; background: #444344; border-right: 1px solid #3b393b; display: flex; align-items: center; padding-left: 5px; }
.panel { width: 37px; background: #4f4c4f; display: flex; flex-direction: column; align-items: center; fill: none; stroke-width: 1.6; padding-left: 1px; }
.p-icon { height: 38.1px; width: 24px; display: flex; align-items: center; justify-content: center; flex: none; }
.p-icon:first-child { height: 37.5px; }
.p-icon.line { border-top: 1px solid #3b393b; }
.p-icon.last { height: 39px; margin-top: auto; border-top: 1px solid #3b393b; padding-left: 4px; }

.taskbar { height: 32px; flex: none; background: #232124; display: flex; }
.start { width: 38px; padding: 2px 0 0 11px; display: flex; align-items: center; }
.search { width: 287px; background: #333; border-left: 1px solid #666; border-right: 1px solid #555; display: flex; align-items: center; padding: 2px 0 0 9px; gap: 8px; font-size: 13px; letter-spacing: -.5px; color: #d0d0d0; }
.apps { display: flex; }
.apps div { width: 41.5px; padding-top: 1px; display: flex; align-items: center; justify-content: center; }
.apps .current { background: #4a484b; }
.tray { margin-left: auto; display: flex; align-items: center; padding: 2px 16px 0 0; border-right: 1px solid #666; margin-right: 1px; }
.tray svg + svg { margin-left: 7px; }
.clock { width: 52px; margin: 0 13px 0 4px; display: flex; flex-direction: column; align-items: center; font-size: 10px; line-height: 15px; letter-spacing: -.3px; color: #e8e8e8; }

.rec { position: absolute; left: -2px; top: 13px; width: 42px; height: 20px; border-radius: 0 6px 6px 0; background: #1c1a1c; display: flex; align-items: center; gap: 5px; padding-left: 7px; font: bold 9px Inter, sans-serif; letter-spacing: .1px; color: #cfcfcf; }
.rec i { width: 5px; height: 5px; border-radius: 50%; background: #ff4f4f; }
.banner { position: absolute; left: 435px; top: -2px; height: 22px; display: flex; }
.banner span { line-height: 20px; padding-bottom: 2px; }
.viewing { width: 295px; background: #66bb2e; border-radius: 0 0 0 3px; display: flex; align-items: center; padding-left: 9px; font-size: 14px; letter-spacing: -.278px; color: #2c5a1a; }
.viewing svg { margin-left: 5px; }
.viewing i { width: 5px; height: 5px; margin: 0 6px 0 11px; border-radius: 2px; background: #c08a3e; }
.viewing b { font: bold 9px Inter, sans-serif; letter-spacing: 0; color: #2b5a1d; }
.options { width: 113px; background: #232427; border-radius: 0 0 3px 0; display: flex; align-items: center; padding-left: 7px; gap: 4px; font-size: 14px; letter-spacing: -.3px; color: #f4f4f4; -webkit-text-stroke: .3px #f4f4f4; }
.toast { position: absolute; left: 501px; top: 43px; width: 275px; height: 50px; background: rgba(42, 45, 50, .87); display: flex; align-items: center; padding-left: 40px; font-size: 14px; color: #fff; }
.toast span { padding-bottom: 2px; letter-spacing: .04px; }
.toast .t-press { letter-spacing: -.34px; }
.toast kbd { width: 33px; height: 34px; margin: 0 8px 0 8px; border: 1px solid #fff; border-radius: 3px; font: 14px/31px "Open Sans", sans-serif; letter-spacing: -.3px; text-align: center; }

.controls { grid-column: 1 / 4; background: linear-gradient(#292a2c, #1c1d1f); display: flex; font-size: 11.5px; color: #9c9c9c; letter-spacing: -.38px; }
.audio { width: 573px; height: 47px; display: flex; align-items: flex-start; padding: 16px 0 0 7px; gap: 13px; }
.audio span { line-height: 17px; }
.audio svg { margin-top: 2px; }
.buttons { display: flex; }
.buttons > div { display: flex; flex-direction: column; align-items: center; line-height: 16px; padding-top: 5px; gap: 4px; }
.b-chat { width: 37px; }
.b-hand { width: 114px; }
.b-set { width: 55px; }
.leave { margin: 11px 14px 0 auto; width: 63px; height: 25px; border-radius: 7px; background: #e02828; color: #fff; font-size: 12px; font-weight: bold; line-height: 25px; text-align: center; letter-spacing: -.26px; }
```
